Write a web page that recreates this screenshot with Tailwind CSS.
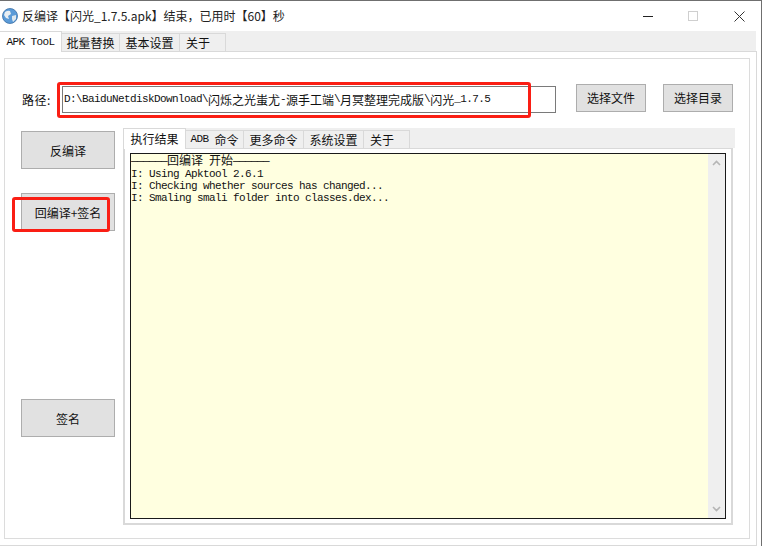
<!DOCTYPE html>
<html lang="zh-CN">
<head>
  <meta charset="UTF-8">
  <title>反编译</title>
  <script src="https://cdn.jsdelivr.net/npm/@tailwindcss/browser@4"></script>
</head>
<body class="bg-white w-[764px] h-[548px] overflow-hidden relative font-['Noto_Sans_CJK_SC',sans-serif] text-[12px] text-[#111]">
  <!-- 窗口 -->
  <div class="w-[762px] h-[546px] border-t border-r border-[#6f6f6f] flex flex-col">
    <!-- 标题栏 -->
    <div class="h-[30px] shrink-0 flex items-center relative">
      <svg class="ml-[2px] w-[16px] h-[16px]" viewBox="0 0 16 16">
        <circle cx="8" cy="8" r="7.5" fill="#5b9bd8"/>
        <path d="M3 4 Q6 2 8 3 L9 6 L6 8 L7 11 L4 10 L2 7 Z" fill="#e8eef2"/>
        <path d="M10 8 L14 7 L14 11 L11 14 L10 11 Z" fill="#dfe8ee"/>
        <circle cx="8" cy="8" r="7.5" fill="none" stroke="#3a6ea5" stroke-width="0.8"/>
      </svg>
      <span class="ml-[4px] text-[12px] leading-none whitespace-pre text-[#222]">反编译【闪光_1.7.5.apk】结束，已用时【60】秒</span>
      <div class="ml-auto flex items-center">
        <div class="w-[10px] h-px bg-[#222] mr-[35px]"></div>
        <div class="w-[10px] h-[10px] border border-[#cfcfcf] mr-[36px]"></div>
        <svg class="w-[11px] h-[11px] mr-[16px]" viewBox="0 0 11 11"><path d="M0.5 0.5 L10.5 10.5 M10.5 0.5 L0.5 10.5" stroke="#333" stroke-width="1" fill="none"/></svg>
      </div>
    </div>

    <!-- 主标签 -->
    <div class="w-[756px] h-[20px] shrink-0 bg-[#efefef] flex items-end">
      <div class="w-[62px] h-[21px] -mb-px relative bg-white border-t border-r border-[#d9d9d9] flex items-center justify-center font-['Liberation_Mono',monospace] text-[11px] tracking-[-0.6px]">APK TooL</div>
      <div class="w-[58px] h-[18px] border-t border-r border-[#d9d9d9] flex items-center justify-center leading-none">批量替换</div>
      <div class="w-[60px] h-[18px] border-t border-r border-[#d9d9d9] flex items-center justify-center leading-none">基本设置</div>
      <div class="w-[46px] h-[18px] border-t border-r border-[#d9d9d9] flex items-center pl-[6px] leading-none">关于</div>
    </div>

    <!-- 主面板 -->
    <div class="w-[757px] h-[495px] shrink-0 border-t border-r border-b border-[#d9d9d9] pt-[6px] pl-[4px]">
      <div class="w-[746px] h-[481px] border border-[#dcdcdc] pt-[25px] pl-[16px]">
        <!-- 路径行 -->
        <div class="flex items-start h-[29px]">
          <div class="w-[41px] pt-[7px] pl-[1px] leading-[18px] tracking-[0.5px] whitespace-pre">路径:</div>
          <div class="w-[494px] h-[27px] mt-[2px] border border-[#7a7a7a] bg-white pl-[1px] flex items-center whitespace-pre font-['Liberation_Mono','Noto_Sans_CJK_SC',monospace] text-[11px] tracking-[-0.6px]">D:\BaiduNetdiskDownload\<span class="text-[12px] tracking-normal font-['Noto_Sans_CJK_SC',sans-serif]">闪烁之光蚩尤</span>-<span class="text-[12px] tracking-normal font-['Noto_Sans_CJK_SC',sans-serif]">源手工端</span>\<span class="text-[12px] tracking-normal font-['Noto_Sans_CJK_SC',sans-serif]">月冥整理完成版</span>\<span class="text-[12px] tracking-normal font-['Noto_Sans_CJK_SC',sans-serif]">闪光</span>_1.7.5</div>
          <button class="w-[70px] h-[28px] ml-[20px] pb-[1px] bg-[#e1e1e1] border border-[#adadad]">选择文件</button>
          <button class="w-[70px] h-[28px] ml-[17px] pb-[1px] bg-[#e1e1e1] border border-[#adadad]">选择目录</button>
        </div>

        <div class="flex items-start mt-[15px]">
          <!-- 左侧按钮 -->
          <div class="w-[94px] pt-[3px] flex flex-col">
            <button class="h-[38px] pt-[2px] bg-[#e1e1e1] border border-[#adadad]">反编译</button>
            <button class="h-[38px] pt-[2px] mt-[24px] bg-[#e1e1e1] border border-[#adadad]">回编译+签名</button>
            <button class="h-[38px] pt-[2px] mt-[168px] bg-[#e1e1e1] border border-[#adadad]">签名</button>
          </div>

          <!-- 右侧标签页 -->
          <div class="ml-[8px] w-[612px]">
            <div class="h-[20px] bg-[#efefef] flex items-end">
              <div class="w-[63px] h-[21px] -mb-px relative bg-white border-t border-x border-[#d9d9d9] flex items-center justify-center leading-none">执行结果</div>
              <div class="w-[58px] h-[18px] border-t border-r border-[#d9d9d9] flex items-center justify-center whitespace-pre font-['Liberation_Mono',monospace] text-[11px] tracking-[-0.6px]">ADB <span class="text-[12px] tracking-normal font-['Noto_Sans_CJK_SC',sans-serif]">命令</span></div>
              <div class="w-[60px] h-[18px] border-t border-r border-[#d9d9d9] flex items-center justify-center leading-none">更多命令</div>
              <div class="w-[60px] h-[18px] border-t border-r border-[#d9d9d9] flex items-center justify-center leading-none">系统设置</div>
              <div class="w-[46px] h-[18px] border-t border-r border-[#d9d9d9] flex items-center pl-[6px] leading-none">关于</div>
            </div>
            <div class="w-[610px] h-[377px] border-t border-[#d9d9d9] border-x-2 border-b-2 pt-[4px] pl-[5px]">
              <!-- 输出框 -->
              <div class="w-[596px] h-[366px] border border-[#1a1a1a] bg-[#ffffe0] flex">
                <div class="flex-1 leading-[12px] whitespace-pre font-['Liberation_Mono','Noto_Sans_CJK_SC',monospace] text-[11px] tracking-[-0.6px]"><div>──────<span class="text-[12px] tracking-normal font-['Noto_Sans_CJK_SC',sans-serif]">回编译</span> <span class="text-[12px] tracking-normal font-['Noto_Sans_CJK_SC',sans-serif]">开始</span>──────</div><div>I: Using Apktool 2.6.1</div><div>I: Checking whether sources has changed...</div><div>I: Smaling smali folder into classes.dex...</div></div>
                <div class="w-[17px] bg-[#efefef] flex flex-col justify-between items-center py-[6px]">
                  <svg class="w-[9px] h-[6px]" viewBox="0 0 9 6"><path d="M1 5 L4.5 1.5 L8 5" stroke="#b5b5b5" stroke-width="1.6" fill="none"/></svg>
                  <svg class="w-[9px] h-[6px]" viewBox="0 0 9 6"><path d="M1 1 L4.5 4.5 L8 1" stroke="#b5b5b5" stroke-width="1.6" fill="none"/></svg>
                </div>
              </div>
            </div>
          </div>
        </div>
      </div>
    </div>
  </div>

  <!-- 红色标注框 -->
  <div class="absolute left-[57px] top-[82px] w-[474px] h-[36px] border-[3px] border-[#fa1e14] rounded-[3px]"></div>
  <div class="absolute left-[12px] top-[197px] w-[98px] h-[35px] border-[3px] border-[#fa1e14] rounded-[3px]"></div>
</body>
</html>
